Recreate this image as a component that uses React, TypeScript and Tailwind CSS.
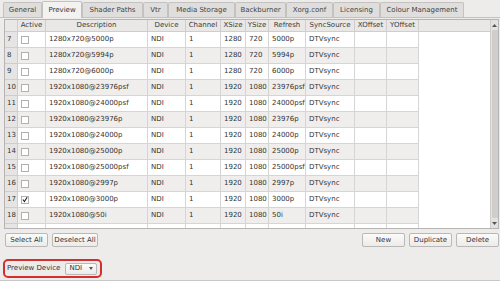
import React from "react";

const tabs = [
  { label: "General", w: 39 },
  { label: "Preview", w: 40, active: true },
  { label: "Shader Paths", w: 61 },
  { label: "Vtr", w: 25 },
  { label: "Media Storage", w: 67 },
  { label: "Backburner", w: 51 },
  { label: "Xorg.conf", w: 47 },
  { label: "Licensing", w: 47 },
  { label: "Colour Management", w: 84 },
];

const cols = [
  { key: "active", label: "Active", w: 28 },
  { key: "desc", label: "Description", w: 102 },
  { key: "device", label: "Device", w: 38 },
  { key: "channel", label: "Channel", w: 35 },
  { key: "xsize", label: "XSize", w: 25 },
  { key: "ysize", label: "YSize", w: 23 },
  { key: "refresh", label: "Refresh", w: 37 },
  { key: "sync", label: "SyncSource", w: 49 },
  { key: "xoff", label: "XOffset", w: 32 },
  { key: "yoff", label: "YOffset", w: 32 },
];

const rows = [
  { n: 7, desc: "1280x720@5000p", x: "1280", y: "720", r: "5000p" },
  { n: 8, desc: "1280x720@5994p", x: "1280", y: "720", r: "5994p" },
  { n: 9, desc: "1280x720@6000p", x: "1280", y: "720", r: "6000p" },
  { n: 10, desc: "1920x1080@23976psf", x: "1920", y: "1080", r: "23976psf" },
  { n: 11, desc: "1920x1080@24000psf", x: "1920", y: "1080", r: "24000psf" },
  { n: 12, desc: "1920x1080@23976p", x: "1920", y: "1080", r: "23976p" },
  { n: 13, desc: "1920x1080@24000p", x: "1920", y: "1080", r: "24000p" },
  { n: 14, desc: "1920x1080@25000p", x: "1920", y: "1080", r: "25000p" },
  { n: 15, desc: "1920x1080@25000psf", x: "1920", y: "1080", r: "25000psf" },
  { n: 16, desc: "1920x1080@2997p", x: "1920", y: "1080", r: "2997p" },
  { n: 17, desc: "1920x1080@3000p", x: "1920", y: "1080", r: "3000p", checked: true },
  { n: 18, desc: "1920x1080@50i", x: "1920", y: "1080", r: "50i" },
  { n: 19, desc: "", x: "", y: "", r: "" },
];

function Check({ checked }: { checked?: boolean }) {
  return (
    <div className="w-[8px] h-[8px] border border-[#b0b0b0] bg-white flex items-center justify-center">
      {checked && (
        <svg width="7" height="7" viewBox="0 0 7 7">
          <path d="M1 3.5 L2.8 5.8 L6 0.8" stroke="#222" strokeWidth="1.3" fill="none" />
        </svg>
      )}
    </div>
  );
}

function Btn({ children, w }: { children: React.ReactNode; w: number }) {
  return (
    <div
      className="h-[14px] flex items-center justify-center border border-[#b9b8b6] rounded-[2px] bg-gradient-to-b from-[#fbfbfa] to-[#ecebe9] text-[#333] text-[7px] leading-none whitespace-nowrap"
      style={{ width: w }}
    >
      {children}
    </div>
  );
}

export default function App() {
  return (
    <div
      className="w-[500px] h-[281px] bg-[#edecea] overflow-hidden flex flex-col text-[#333]"
      style={{ fontFamily: '"DejaVu Sans", sans-serif' }}
    >
      {/* tabs */}
      <div className="h-[18px] pl-[3px] flex items-end border-b border-[#c3c2c0] shrink-0">
        {tabs.map((t) =>
          t.active ? (
            <div
              key={t.label}
              className="h-[17px] mb-[-1px] flex items-center justify-center bg-[#f3f2f1] border border-b-0 border-[#c3c2c0] rounded-t-[2px] text-[7px] leading-none text-[#333]"
              style={{ width: t.w }}
            >
              {t.label}
            </div>
          ) : (
            <div
              key={t.label}
              className="h-[15px] flex items-center justify-center bg-[#dfdedc] border border-b-0 border-[#c3c2c0] rounded-t-[2px] text-[7px] leading-none text-[#444]"
              style={{ width: t.w }}
            >
              {t.label}
            </div>
          )
        )}
      </div>

      {/* table frame */}
      <div className="mt-[1px] ml-[4px] mr-[1px] h-[210px] border border-[#b5b4b2] bg-white flex overflow-hidden shrink-0">
        <div className="flex-1 flex flex-col overflow-hidden">
          {/* header */}
          <div className="h-[12px] flex bg-[#e9e8e6] border-b border-[#cfcecc] shrink-0">
            <div className="w-[13px] border-r border-[#cfcecc]" />
            {cols.map((c) => (
              <div
                key={c.key}
                className="border-r border-[#cfcecc] flex items-center justify-center text-[7px] leading-none text-[#3a3a3a]"
                style={{ width: c.w }}
              >
                {c.label}
              </div>
            ))}
            <div className="flex-1" />
          </div>
          {rows.map((r, i) => {
            const bg = i % 2 === 0 ? "bg-white" : "bg-[#efeeed]";
            return (
              <div key={r.n} className="h-[16px] flex shrink-0">
                <div className="w-[13px] bg-[#e6e5e3] border-r border-b border-[#cfcecc] flex items-center pl-[2px] text-[7px] leading-none text-[#333]">
                  {r.desc ? r.n : ""}
                </div>
                <div className={`flex ${bg}`}>
                  {cols.map((c) => {
                    let content: React.ReactNode = null;
                    if (c.key === "active") content = r.desc ? <Check checked={r.checked} /> : null;
                    else if (r.desc) {
                      const map: Record<string, string> = {
                        desc: r.desc,
                        device: "NDI",
                        channel: "1",
                        xsize: r.x,
                        ysize: r.y,
                        refresh: r.r,
                        sync: "DTVsync",
                        xoff: "",
                        yoff: "",
                      };
                      content = map[c.key];
                    }
                    return (
                      <div
                        key={c.key}
                        className="border-r border-b border-[#d6d5d3] flex items-center pl-[3px] text-[7px] leading-none text-[#333] whitespace-nowrap overflow-hidden"
                        style={{ width: c.w }}
                      >
                        {content}
                      </div>
                    );
                  })}
                </div>
                <div className="flex-1 bg-white" />
              </div>
            );
          })}
        </div>
        {/* scrollbar */}
        <div className="w-[8px] bg-[#e3e2e0] border-l border-[#cfcecc] flex flex-col items-center shrink-0">
          <div className="h-[10px] flex items-center justify-center">
            <svg width="5" height="3" viewBox="0 0 5 3">
              <path d="M0 3 L2.5 0 L5 3 Z" fill="#555" />
            </svg>
          </div>
          <div className="flex-1 w-[6px] bg-[#cfcecc] rounded-[1px]" />
          <div className="h-[10px] flex items-center justify-center">
            <svg width="5" height="3" viewBox="0 0 5 3">
              <path d="M0 0 L2.5 3 L5 0 Z" fill="#555" />
            </svg>
          </div>
        </div>
      </div>

      {/* buttons */}
      <div className="mt-[4px] pl-[5px] pr-[1px] flex items-center shrink-0">
        <div className="flex gap-[4px]">
          <Btn w={43}>Select All</Btn>
          <Btn w={46}>Deselect All</Btn>
        </div>
        <div className="flex-1" />
        <div className="flex gap-[4px]">
          <Btn w={43}>New</Btn>
          <Btn w={43}>Duplicate</Btn>
          <Btn w={43}>Delete</Btn>
        </div>
      </div>

      {/* preview device */}
      <div className="mt-[12px] ml-[3px] w-[99px] h-[19px] border-2 border-[#d42f2f] rounded-[5px] flex items-center pl-[2px] gap-[5px] shrink-0">
        <span className="text-[7px] leading-none text-[#333]">Preview Device</span>
        <div className="w-[32px] h-[12px] border border-[#b9b8b6] rounded-[2px] bg-gradient-to-b from-[#fbfbfa] to-[#ecebe9] flex items-center justify-between px-[3px]">
          <span className="text-[7px] leading-none text-[#333]">NDI</span>
          <svg width="4" height="3" viewBox="0 0 4 3">
            <path d="M0 0 L2 3 L4 0 Z" fill="#555" />
          </svg>
        </div>
      </div>
      <div className="flex-1" />
      <div className="h-[1px] bg-[#c8c7c5] shrink-0" />
    </div>
  );
}
